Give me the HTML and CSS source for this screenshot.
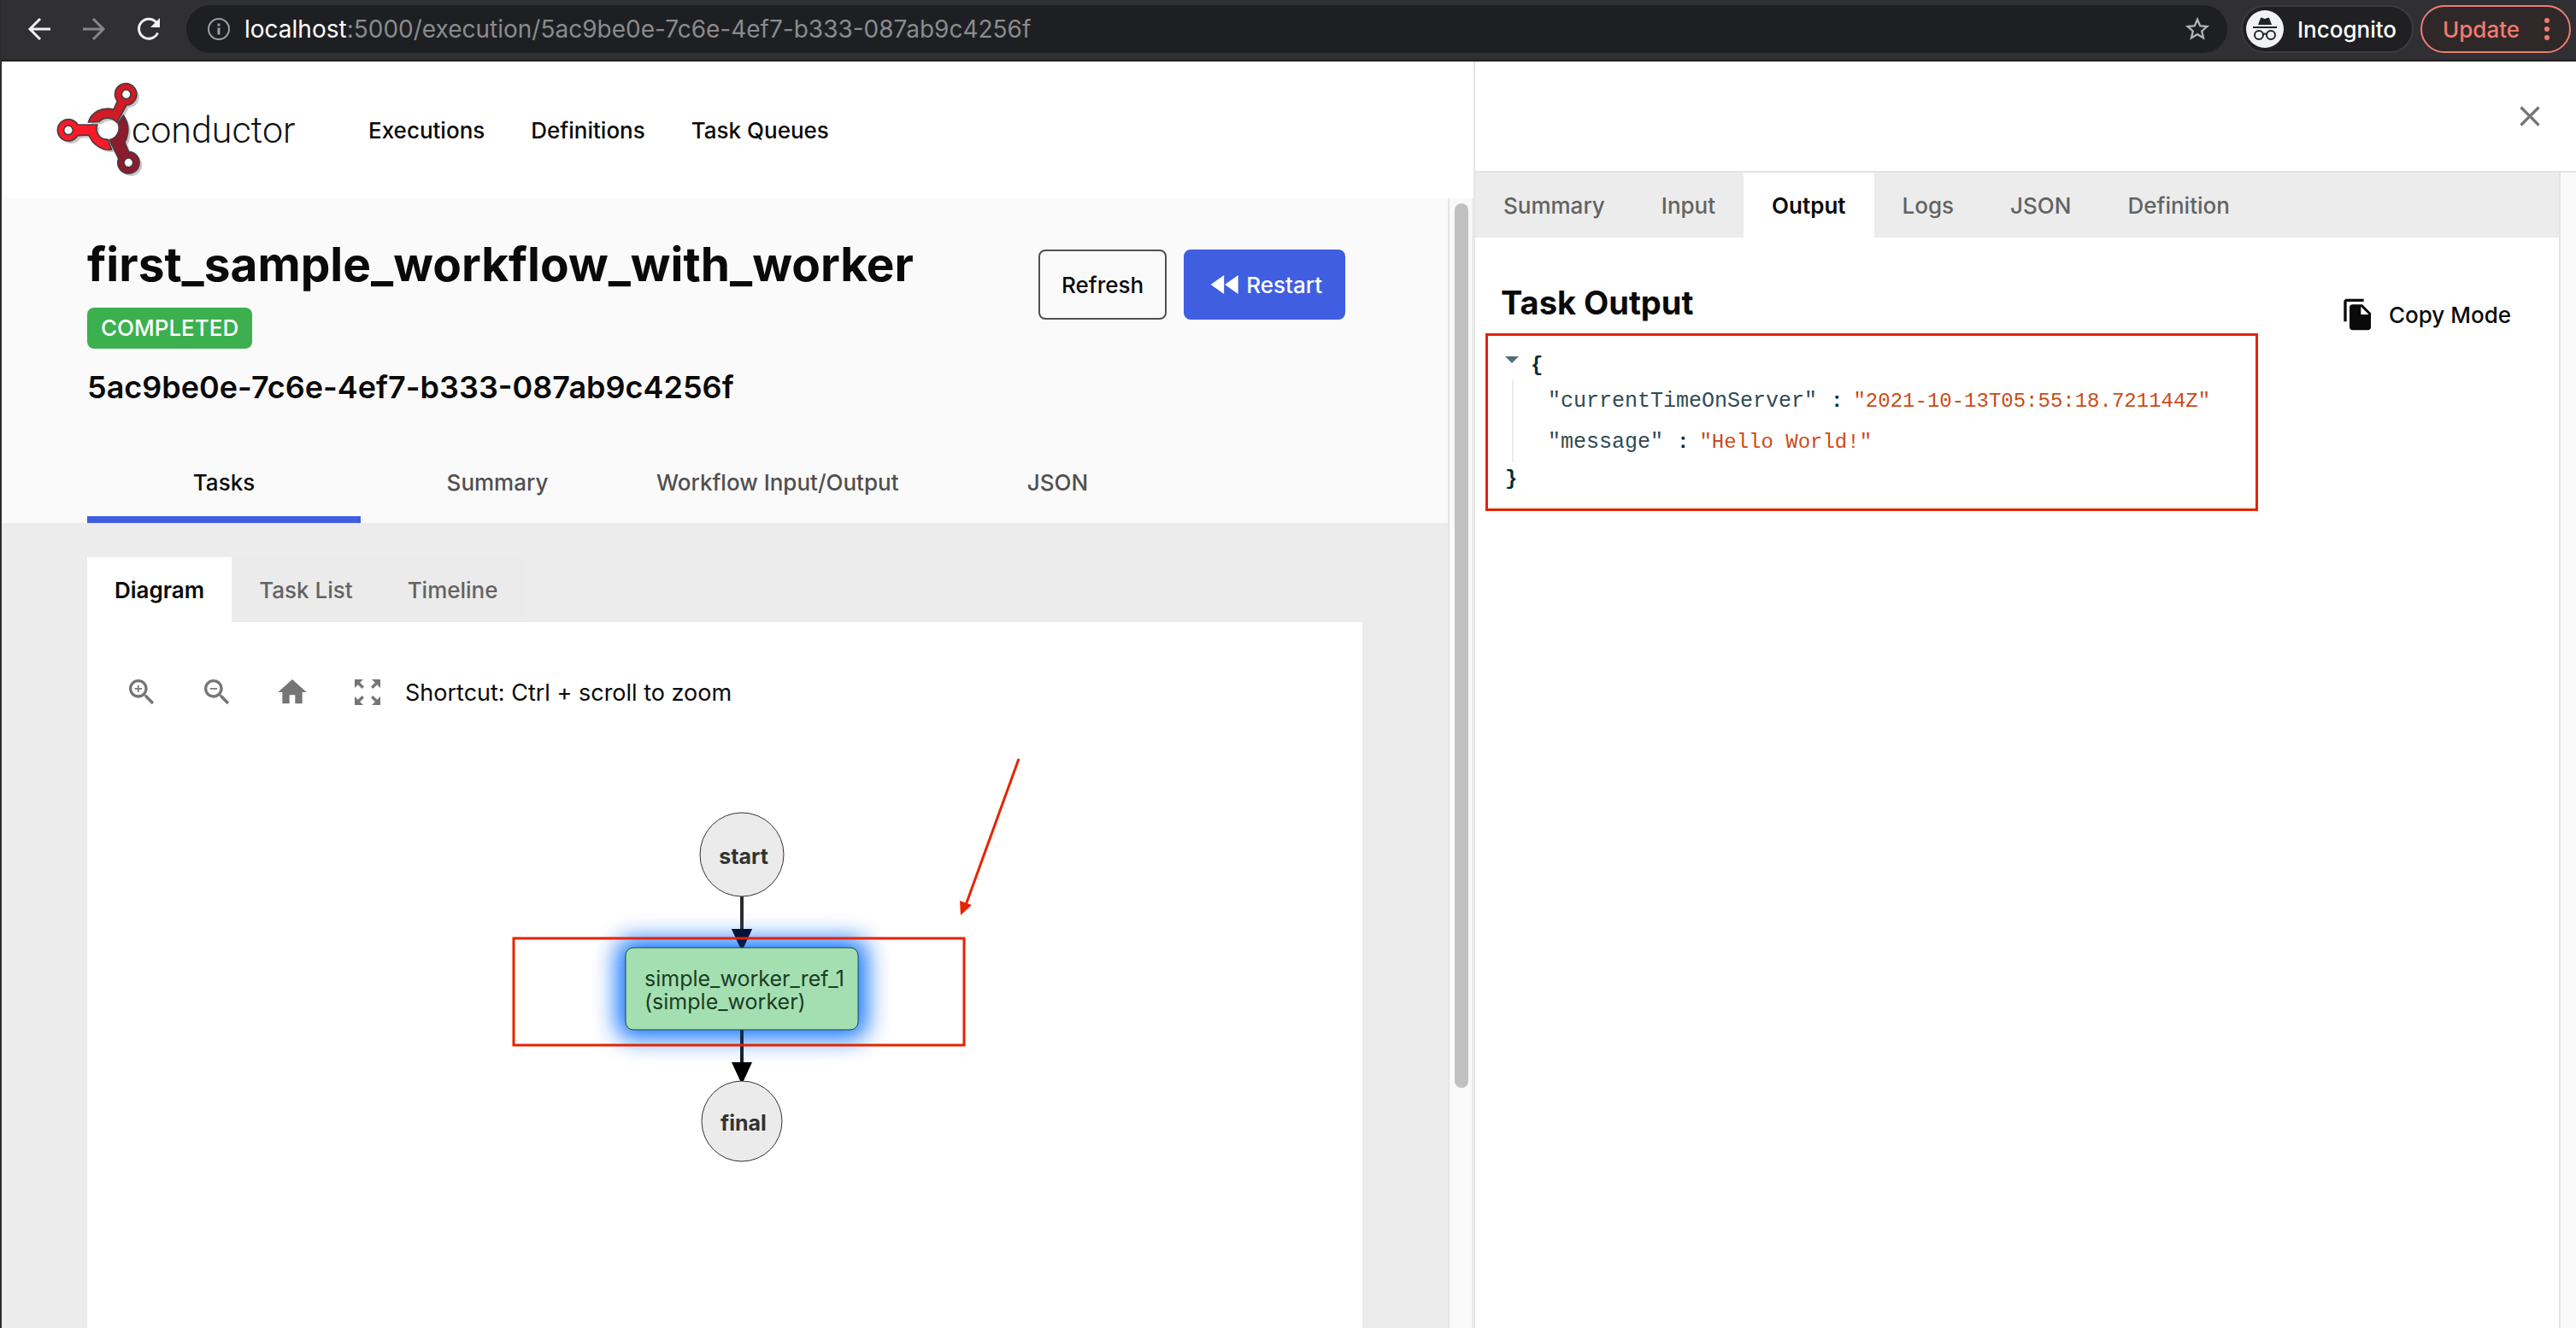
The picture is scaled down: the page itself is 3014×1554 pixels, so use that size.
FILE: index.html
```html
<!DOCTYPE html>
<html lang="en">
<head>
<meta charset="utf-8">
<title>Conductor - first_sample_workflow_with_worker</title>
<link rel="stylesheet" href="styles.css">
</head>
<body>
<div class="window">
  <div class="browser-bar">
    <div class="browser-nav">
      <button class="bar-button" aria-label="Back"><svg width="32" height="32" viewBox="0 0 32 32"><path d="M29 16H5M17 4L5 16l12 12" fill="none" stroke="#f1f1f3" stroke-width="3"/></svg></button>
      <button class="bar-button" aria-label="Forward"><svg width="32" height="32" viewBox="0 0 32 32"><path d="M3 16h24M15 4l12 12-12 12" fill="none" stroke="#85868a" stroke-width="3"/></svg></button>
      <button class="bar-button" aria-label="Reload"><svg width="32" height="32" viewBox="0 0 32 32"><path d="M26.500 20.500a11.500 11.500 0 1 1-2-12.500" fill="none" stroke="#f1f1f3" stroke-width="3"/><path d="M29 3v11H18z" fill="#f1f1f3"/></svg></button>
    </div>
    <div class="address">
      <svg width="28" height="28" viewBox="0 0 28 28"><circle cx="14" cy="14" r="12" fill="none" stroke="#9aa0a6" stroke-width="2"/><path d="M14 12.500v8M14 7.500v3" stroke="#9aa0a6" stroke-width="3"/></svg>
      <div class="url"><span class="host">localhost</span>:5000/execution/5ac9be0e-7c6e-4ef7-b333-087ab9c4256f</div>
      <button class="bar-button" aria-label="Bookmark"><svg width="34" height="34" viewBox="0 0 24 24"><path fill="#b4b4b6" d="M22 9.240l-7.190-.62L12 2 9.190 8.630 2 9.240l5.460 4.730L5.820 21 12 17.270 18.180 21l-1.630-7.030L22 9.240zM12 15.400l-3.760 2.270 1-4.280-3.320-2.880 4.380-.38L12 6.100l1.710 4.040 4.380.38-3.320 2.880 1 4.280L12 15.400z"/></svg></button>
    </div>
    <div class="incognito">
      <svg width="44" height="44" viewBox="0 0 44 44"><circle cx="22" cy="22" r="22" fill="#f1f2f5"/><path d="M14 17l3-8c3-1 3 1 5 1s2-2 5-1l3 8z" fill="#222"/><path d="M8 20h28" stroke="#222" stroke-width="2"/><g fill="none" stroke="#222" stroke-width="2"><circle cx="15" cy="29" r="5"/><circle cx="29" cy="29" r="5"/><path d="M20 28q2-1 4 0"/></g></svg>
      <span>Incognito</span>
    </div>
    <button class="update"><span>Update</span><svg width="8" height="28" viewBox="0 0 8 28" fill="#f07b72"><circle cx="4" cy="4" r="3"/><circle cx="4" cy="14" r="3"/><circle cx="4" cy="24" r="3"/></svg></button>
  </div>

  <div class="workspace">
    <main class="main">
      <header class="app-header">
        <a class="logo" href="#">
          <svg width="104" height="114" viewBox="46 48 312 342">
            <g transform="translate(9 9)" opacity=".22"><path d="M158 192C170 155 205 138 247 147L260 118A38 38 0 1 1 292 132L258 193A42 42 0 0 0 196 190ZM190 201H121A38 38 0 1 0 121 239L160 237C172 270 205 292 240 288L226 252A36 36 0 0 1 190 201ZM281 168C300 195 302 230 286 264L300 296A38 38 0 1 1 264 320L232 254A42 42 0 0 0 262 196Z"/></g>
            <g stroke="#4b3b40" stroke-width="5" stroke-linejoin="round">
              <path fill="#cf1c25" d="M158 192C170 155 205 138 247 147L260 118A38 38 0 1 1 292 132L258 193A42 42 0 0 0 196 190Z"/>
              <path fill="#fb1b27" d="M190 201H121A38 38 0 1 0 121 239L160 237C172 270 205 292 240 288L226 252A36 36 0 0 1 190 201Z"/>
              <path fill="#8c1b2c" d="M281 168C300 195 302 230 286 264L300 296A38 38 0 1 1 264 320L232 254A42 42 0 0 0 262 196Z"/>
              <circle cx="291" cy="94" r="16" fill="#fff"/><circle cx="88" cy="220" r="16" fill="#fff"/><circle cx="299" cy="334" r="16" fill="#fff"/>
            </g>
          </svg>
          <span class="logo-name">conductor</span>
        </a>
        <nav class="app-nav">
          <a href="#">Executions</a>
          <a href="#">Definitions</a>
          <a href="#">Task Queues</a>
        </nav>
      </header>

      <div class="scroll-area">
        <div class="page">
          <section class="summary">
            <div class="summary-top">
              <div>
                <h1>first_sample_workflow_with_worker</h1>
                <span class="status">COMPLETED</span>
                <h2>5ac9be0e-7c6e-4ef7-b333-087ab9c4256f</h2>
              </div>
              <div class="actions">
                <button class="button">Refresh</button>
                <button class="button primary"><svg width="44" height="44" viewBox="0 0 24 24"><path fill="#fff" d="M11 18V6l-8.500 6 8.500 6zm.500-6l8.500 6V6l-8.500 6z"/></svg>Restart</button>
              </div>
            </div>
            <div class="main-tabs" role="tablist">
              <button class="main-tab active" role="tab" aria-selected="true">Tasks</button>
              <button class="main-tab" role="tab">Summary</button>
              <button class="main-tab" role="tab">Workflow Input/Output</button>
              <button class="main-tab" role="tab">JSON</button>
            </div>
          </section>

          <section class="tasks">
            <div class="tabs" role="tablist">
              <button class="tab active" role="tab" aria-selected="true">Diagram</button>
              <button class="tab" role="tab">Task List</button>
              <button class="tab" role="tab">Timeline</button>
            </div>
            <div class="card">
              <div class="tools">
                <button aria-label="Zoom in"><svg viewBox="0 0 24 24"><path d="M15.500 14h-.79l-.28-.27C15.410 12.590 16 11.110 16 9.500 16 5.910 13.090 3 9.500 3S3 5.910 3 9.500 5.910 16 9.500 16c1.610 0 3.090-.59 4.230-1.570l.27.28v.79l5 4.990L20.490 19l-4.990-5zm-6 0C7.010 14 5 11.990 5 9.500S7.010 5 9.500 5 14 7.010 14 9.500 11.990 14 9.500 14zm2.500-4h-2v2H9v-2H7V9h2V7h1v2h2v1z"/></svg></button>
                <button aria-label="Zoom out"><svg viewBox="0 0 24 24"><path d="M15.500 14h-.79l-.28-.27C15.410 12.590 16 11.110 16 9.500 16 5.910 13.090 3 9.500 3S3 5.910 3 9.500 5.910 16 9.500 16c1.610 0 3.090-.59 4.230-1.570l.27.28v.79l5 4.990L20.490 19l-4.990-5zm-6 0C7.010 14 5 11.990 5 9.500S7.010 5 9.500 5 14 7.010 14 9.500 11.990 14 9.500 14zM7 9h5v1H7z"/></svg></button>
                <button aria-label="Reset view"><svg viewBox="0 0 24 24"><path d="M10 20v-6h4v6h5v-8h3L12 3 2 12h3v8z"/></svg></button>
                <button aria-label="Fit to screen"><svg viewBox="0 0 24 24"><path d="M15 3l2.300 2.300-2.890 2.870 1.420 1.420L18.700 6.700 21 9V3zM3 9l2.300-2.300 2.870 2.890 1.420-1.420L6.700 5.300 9 3H3zm6 12l-2.300-2.300 2.890-2.870-1.420-1.420L5.300 17.300 3 15v6zm12-6l-2.300 2.300-2.870-2.890-1.420 1.420 2.890 2.870L15 21h6z"/></svg></button>
                <span>Shortcut: Ctrl + scroll to zoom</span>
              </div>
              <svg class="diagram" width="1492" height="620" viewBox="0 0 1492 620">
                <defs><filter id="glow" x="-30%" y="-70%" width="160%" height="240%"><feGaussianBlur stdDeviation="14"/></filter></defs>
                <path d="M766 179v38M766 335v38" stroke="#2b2b2b" stroke-width="4"/>
                <path d="M754 217h24l-12 26zM754 373h24l-12 26z" fill="#000"/>
                <rect x="620" y="229" width="292" height="116" rx="16" fill="#006aff" opacity=".95" filter="url(#glow)"/>
                <path d="M766 335v38" stroke="#111c2c" stroke-width="4" opacity=".7"/>
                <path d="M754 217h24l-12 26z" fill="#000f30" opacity=".75"/>
                <circle cx="766" cy="130" r="49" fill="#ebebeb" stroke="#333"/>
                <rect x="630" y="239" width="272" height="96" rx="9" fill="#a4dfb2" stroke="#1f4a34"/>
                <circle cx="766" cy="442" r="47" fill="#ebebeb" stroke="#333"/>
                <text class="node-name" x="768" y="141">start</text>
                <text class="node-name" x="768" y="453">final</text>
                <text class="node-task" x="652" y="284">simple_worker_ref_1</text>
                <text class="node-task" x="652" y="311">(simple_worker)</text>
                <path d="M1090 18L1028 189" stroke="#e62300" stroke-width="3"/>
                <path d="M1022 201l-1-17 14 5z" fill="#e62300"/>
                <rect x="499" y="228" width="527" height="125" fill="none" stroke="#e62300" stroke-width="3"/>
              </svg>
            </div>
          </section>
        </div>
        <div class="scrollbar"><div class="thumb"></div></div>
      </div>
    </main>

    <aside class="drawer">
      <div class="drawer-head">
        <button aria-label="Close"><svg width="40" height="40" viewBox="0 0 24 24"><path fill="#757575" d="M19 6.410L17.590 5 12 10.590 6.410 5 5 6.410 10.590 12 5 17.590 6.410 19 12 13.410 17.590 19 19 17.590 13.410 12z"/></svg></button>
      </div>
      <div class="drawer-body">
        <div class="drawer-content">
          <div class="tabs wide" role="tablist">
            <button class="tab" role="tab">Summary</button>
            <button class="tab" role="tab">Input</button>
            <button class="tab active" role="tab" aria-selected="true">Output</button>
            <button class="tab" role="tab">Logs</button>
            <button class="tab" role="tab">JSON</button>
            <button class="tab" role="tab">Definition</button>
          </div>
          <div class="output">
            <div class="output-head">
              <h3>Task Output</h3>
              <button class="copy"><svg width="40" height="40" viewBox="0 0 24 24"><path fill="#0a0a0a" d="M16 1H4c-1.100 0-2 .9-2 2v14h2V3h12V1zm-1 4l6 6v10c0 1.100-.9 2-2 2H7.990C6.890 23 6 22.100 6 21l.010-14c0-1.100.89-2 1.990-2h7zm-1 7h5.500L14 6.500V12z"/></svg>Copy Mode</button>
            </div>
            <div class="json">
              <div class="json-open"><span class="caret"></span><b>{</b></div>
              <div class="json-rows">
                <div class="json-row"><span class="key">"currentTimeOnServer"</span><b>:</b><span class="value">"2021-10-13T05:55:18.721144Z"</span></div>
                <div class="json-row"><span class="key">"message"</span><b>:</b><span class="value">"Hello World!"</span></div>
              </div>
              <div class="json-close"><b>}</b></div>
            </div>
          </div>
        </div>
        <div class="gutter"></div>
      </div>
    </aside>
  </div>
</div>
</body>
</html>
```

FILE: styles.css
```css
* { box-sizing: border-box; }

body {
  margin: 0;
  background: #fff;
  color: #0a0a0a;
  font-family: Inter, "Liberation Sans", sans-serif;
  font-size: 26px;
}

button {
  margin: 0;
  padding: 0;
  border: 0;
  background: none;
  color: inherit;
  font: inherit;
}

svg { display: block; flex: none; }
a { color: inherit; text-decoration: none; }
h1, h2, h3 { margin: 0; font-weight: 700; }

.window {
  display: flex;
  flex-direction: column;
  height: 100vh;
  overflow: hidden;
  border-left: 2px solid #2b2b2d;
}

/* Browser toolbar */
.browser-bar {
  display: flex;
  align-items: center;
  flex: none;
  gap: 8px;
  height: 72px;
  padding: 6px 6px 8px 28px;
  border-bottom: 2px solid #231f20;
  background: #302f34;
  color: #fff;
}
.browser-nav { display: flex; gap: 32px; margin-right: 20px; }
.address {
  display: flex;
  align-items: center;
  flex: 1;
  height: 56px;
  padding: 0 18px 0 24px;
  border-radius: 28px;
  background: #1e1f23;
}
.url { flex: 1; margin-left: 16px; color: #8a8b8e; font-size: 28px; }
.host { color: #fff; }
.incognito {
  display: flex;
  align-items: center;
  gap: 16px;
  height: 56px;
  margin-left: 8px;
  padding: 0 18px 0 4px;
  border: 2px solid #3c3c3e;
  border-radius: 28px;
  background: #202022;
  font-weight: 500;
}
.update {
  display: flex;
  align-items: center;
  justify-content: space-between;
  width: 176px;
  height: 56px;
  padding: 0 22px 0 24px;
  border: 2px solid #f07b72;
  border-radius: 28px;
  background: #2f2828;
  color: #f07b72;
  font-weight: 500;
}

.workspace { display: flex; flex: 1; min-height: 0; }
.main { display: flex; flex-direction: column; flex: 1; min-width: 0; }

/* App header */
.app-header {
  display: flex;
  align-items: center;
  flex: none;
  height: 160px;
  padding-left: 64px;
}
.logo { display: flex; align-items: center; width: 365px; }
.logo-name {
  margin-left: -16px;
  color: #111;
  font-family: Roboto, sans-serif;
  font-size: 43px;
  font-weight: 300;
}
.app-nav { display: flex; gap: 54px; font-weight: 500; }

.scroll-area { display: flex; flex: 1; min-height: 0; }
.page {
  display: flex;
  flex-direction: column;
  flex: 1;
  min-width: 0;
  overflow: hidden;
  background: #ececec;
}
.scrollbar {
  width: 30px;
  padding: 6px;
  border-left: 2px solid #e4e4e4;
  border-right: 2px solid #ececec;
  background: #f9f9f9;
}
.thumb { width: 16px; height: 79%; border-radius: 8px; background: #c0c0c0; }

/* Workflow summary */
.summary { flex: none; padding: 44px 120px 0 100px; background: #fafafa; }
.summary-top { display: flex; justify-content: space-between; }
h1 { font-size: 55px; line-height: 66px; }
.status {
  display: block;
  width: fit-content;
  margin: 18px 0 24px;
  padding: 0 16px;
  border-radius: 8px;
  background: #3cb04f;
  color: #fff;
  font-weight: 500;
  line-height: 48px;
}
h2 { font-size: 36px; font-weight: 600; line-height: 42px; }
.actions { display: flex; align-items: flex-start; gap: 20px; padding-top: 16px; }
.button {
  display: flex;
  align-items: center;
  gap: 2px;
  height: 82px;
  padding: 0 25px;
  border: 2px solid #505050;
  border-radius: 8px;
  font-weight: 500;
}
.primary { border-color: #3f5fe0; background: #3f5fe0; color: #fff; }
.main-tabs { display: flex; margin-top: 42px; }
.main-tab {
  min-width: 320px;
  height: 96px;
  padding: 0 26px;
  color: #505050;
  font-weight: 500;
}
.main-tab.active { color: #0a0a0a; box-shadow: inset 0 -8px #3f5fe0; }

/* Secondary tabs */
.tabs { display: flex; flex: none; width: fit-content; background: #ebebeb; }
.tab { height: 76px; padding: 0 32px; color: #636363; font-weight: 500; }
.tab.active { background: #fff; color: #0a0a0a; font-weight: 600; }
.tabs.wide { width: auto; background: #ececec; }
.tabs.wide .tab { padding: 0 33px; }

.tasks {
  display: flex;
  flex-direction: column;
  flex: 1;
  min-height: 0;
  padding: 40px 100px 0;
}
.card { flex: 1; min-height: 0; overflow: hidden; background: #fff; }
.tools {
  display: flex;
  align-items: center;
  gap: 48px;
  padding: 62px 44px 38px;
  font-size: 27px;
}
.tools svg { width: 40px; height: 40px; fill: #757575; }
.tools span { margin-left: -24px; }
.diagram { margin-top: 2px; }
.node-name { fill: #333; font-size: 25px; font-weight: 700; text-anchor: middle; }
.node-task { fill: #1b3d24; font-size: 25px; }

/* Task drawer */
.drawer {
  display: flex;
  flex-direction: column;
  flex: 0 0 1290px;
  border-left: 2px solid #e4e4e4;
}
.drawer-head {
  display: flex;
  align-items: center;
  justify-content: flex-end;
  height: 130px;
  padding-right: 34px;
  border-bottom: 2px solid #e4e4e4;
}
.drawer-body { display: flex; flex: 1; }
.drawer-content { flex: 1; min-width: 0; }
.gutter { width: 20px; border-left: 2px solid #e4e4e4; background: #f9f9f9; }
.output { padding: 48px 56px 0 12px; }
.output-head {
  display: flex;
  align-items: flex-start;
  justify-content: space-between;
  height: 64px;
  padding-left: 18px;
}
h3 { font-size: 38px; line-height: 56px; }
.copy { display: flex; align-items: center; gap: 16px; margin-top: 22px; font-weight: 500; }
.json {
  width: 904px;
  height: 208px;
  padding: 16px 20px;
  border: 3px solid #e62300;
  color: #002b36;
  font-family: "Liberation Mono", monospace;
  font-size: 24px;
}
.json-open { display: flex; gap: 14px; height: 36px; line-height: 38px; }
.caret {
  height: 8px;
  margin-top: 8px;
  border: 8px solid transparent;
  border-top-color: #586e75;
  border-bottom-width: 0;
}
.json-rows { margin-left: 8px; padding-left: 40px; border-left: 2px solid #ebebeb; }
.json-row { display: flex; align-items: center; gap: 12px; height: 48px; }
.json-close { line-height: 40px; }
.key { margin-right: 4px; color: #2f4b54; font-size: 25px; }
.value { color: #cb4b16; }
```
